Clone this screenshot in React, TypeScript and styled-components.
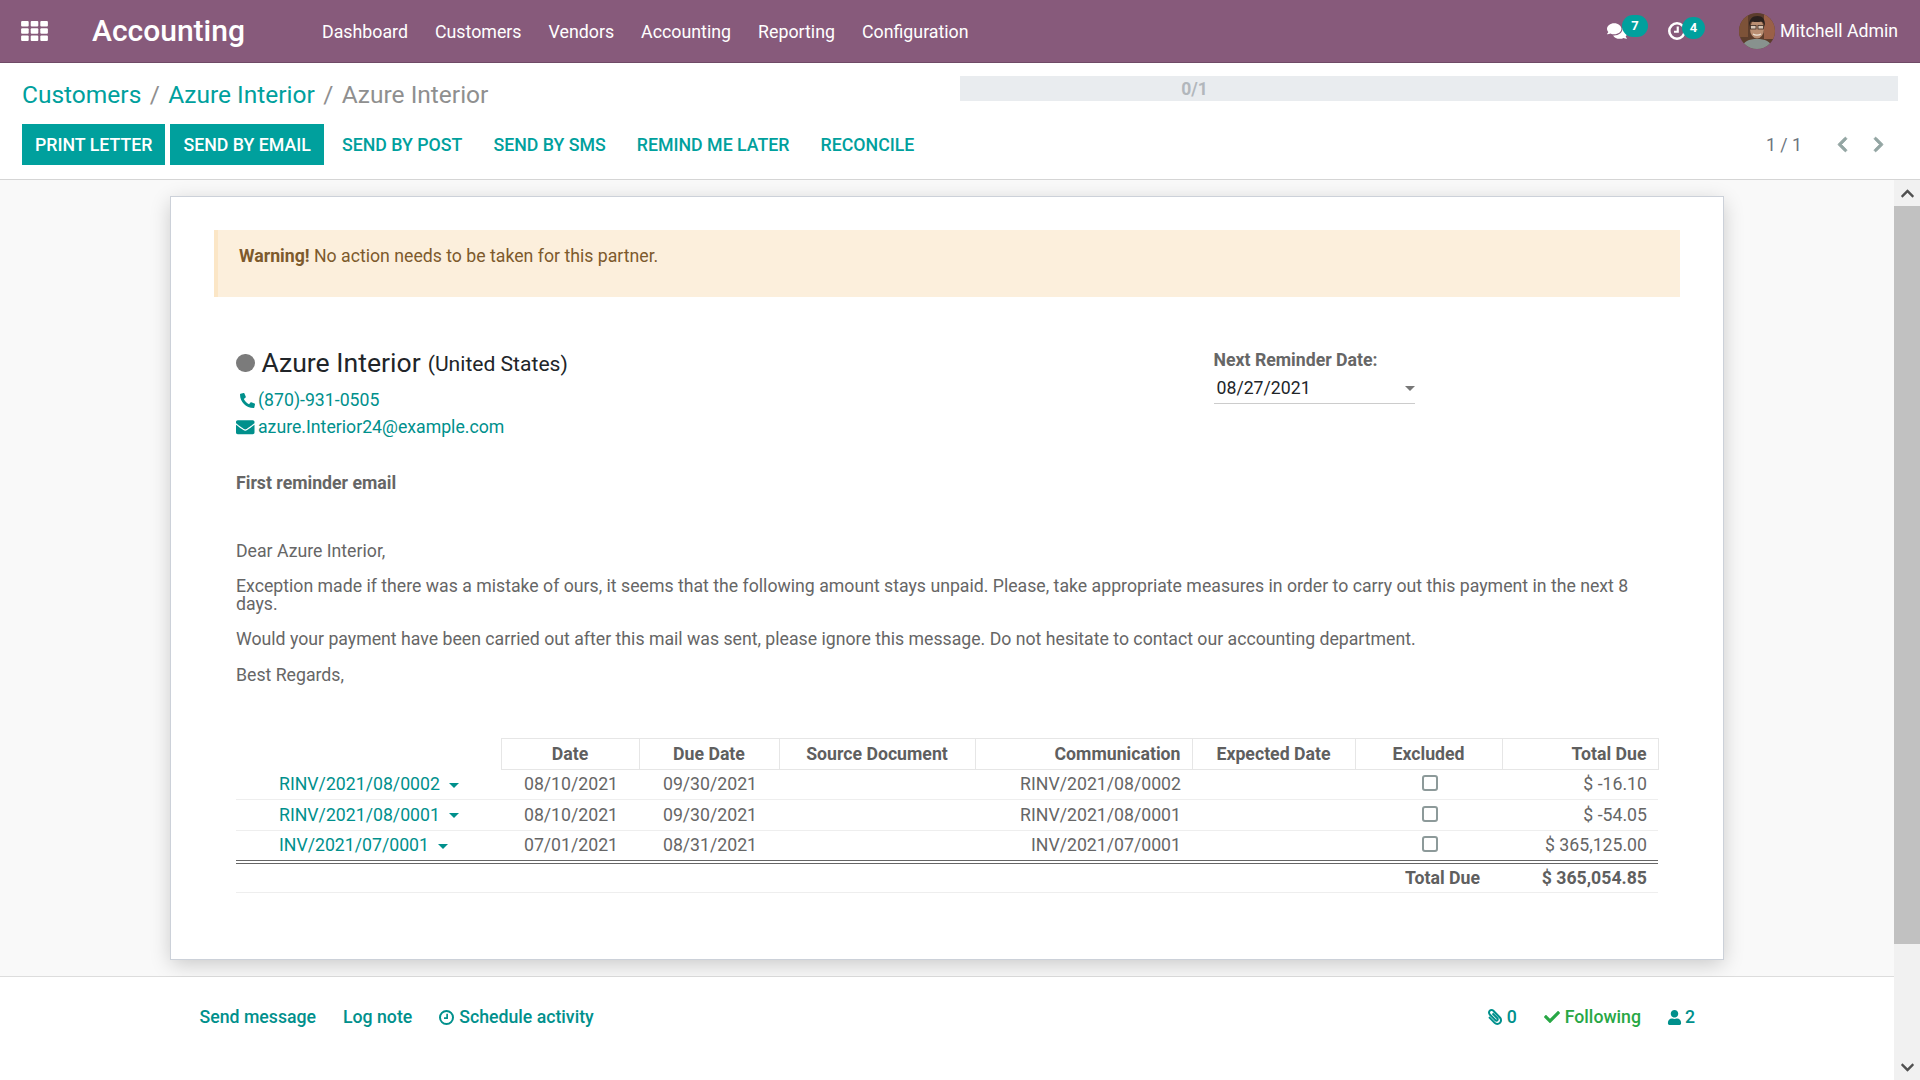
import React from "react";
import styled, { createGlobalStyle } from "styled-components";
import { FaComments, FaPhone, FaEnvelope, FaPaperclip, FaCheck, FaUser, FaChevronLeft, FaChevronRight, FaChevronUp, FaChevronDown } from "react-icons/fa";

const Global = createGlobalStyle`
  html, body { margin: 0; padding: 0; width: 1920px; height: 1080px; overflow: hidden; background: #fff; }
  body { font-family: Roboto, "Liberation Sans", sans-serif; font-size: 17.7px; color: #666; }
  * { box-sizing: border-box; }
`;

const Page = styled.div`
  width: 1920px; height: 1080px; display: flex; flex-direction: column; overflow: hidden;
`;
const TopBar = styled.header`
  height: 63px; flex: none; background: #875a7b; border-bottom: 1px solid #6f4a66;
  display: flex; align-items: center; color: #fff; padding: 0 22px 0 21px;
`;
const Brand = styled.div`
  font-size: 30px; font-weight: 500; margin-left: 44px; margin-right: 77px; line-height: 1;
`;
const Nav = styled.nav`
  display: flex; gap: 27px; font-size: 17.8px; flex: 1; padding-top: 1px;
`;
const Systray = styled.div`
  display: flex; align-items: center; font-size: 17.7px;
`;
const TrayItem = styled.div<{ $w: number }>`
  position: relative; width: ${p => p.$w}px; display: flex; align-items: center; height: 40px;
`;
const Badge = styled.span<{ $l: number; $t: number; $w: number }>`
  position: absolute; left: ${p => p.$l}px; top: ${p => p.$t}px; width: ${p => p.$w}px; height: 21.500px;
  background: #00a09d; border-radius: 11px; color: #fff; font-size: 13px; font-weight: 700;
  display: flex; align-items: center; justify-content: center;
`;
const User = styled.div`
  display: flex; align-items: center; gap: 5px;
`;

const ControlPanel = styled.div`
  flex: none; height: 117px; border-bottom: 1px solid #d5d5d5; background: #fff;
  padding: 13px 22px 0; display: flex; flex-direction: column;
`;
const CpRow = styled.div`
  display: flex; align-items: center; justify-content: space-between;
`;
const Crumbs = styled.div`
  font-size: 24.5px; display: flex; gap: 8.400px; color: #8f8f8f; line-height: 36px; padding-top: 1px; height: 36px;
`;
const CrumbLink = styled.a`
  color: #00a09d;
`;
const Progress = styled.div`
  width: 938px; height: 25px; background: #e9ecef; align-self: flex-start;
`;
const ProgressLabel = styled.div`
  width: 50%; height: 100%; display: flex; align-items: center; justify-content: center;
  color: #b2b7bc; font-size: 17.5px; font-weight: 700;
`;
const CpRowBottom = styled(CpRow)`
  margin-top: 12px;
`;
const Buttons = styled.div`
  display: flex; align-items: center;
`;
const Btn = styled.button<{ $primary?: boolean }>`
  height: 41px; border: 0; font-family: inherit; font-size: 17.75px; font-weight: 500; text-transform: uppercase;
  padding: 0 13px; margin-right: 5px;
  background: ${p => (p.$primary ? "#00a09d" : "transparent")};
  color: ${p => (p.$primary ? "#fff" : "#00a09d")};
`;
const Pager = styled.div`
  display: flex; align-items: center; color: #6c757d; font-size: 17.7px; padding-right: 14px;
  svg { color: #93a5a3; width: 11px; height: 17px; stroke: currentColor; stroke-width: 25px; }
`;
const PagerCount = styled.span`
  margin-right: 35px;
`;
const PagerNext = styled.span`
  display: flex; margin-left: 25px;
`;

const Body = styled.div`
  flex: 1; min-height: 0; display: flex;
`;
const Main = styled.div`
  flex: 1; min-width: 0; display: flex; flex-direction: column;
`;
const FormArea = styled.div`
  height: 797px; flex: none; background: #f9f9f9; padding: 16px 170px 0 170px; border-bottom: 1px solid #ddd;
`;
const Sheet = styled.div`
  height: 764px; background: #fff; border: 1px solid #ccd1d9; box-shadow: 0 5px 20px -1px rgba(0,0,0,0.2);
  padding: 33px 43px 0 43px;
`;
const Alert = styled.div`
  height: 67px; background: #fcefdc; border-left: 4px solid #fbe6c6; color: #7d5a2c; padding: 15px 21px; line-height: 22px;
`;
const AlertStrong = styled.strong`
  font-weight: 700;
`;
const Content = styled.div`
  padding: 0 21px 0 22px;
`;
const Head = styled.div`
  display: flex; justify-content: space-between; margin-top: 51px;
`;
const Title = styled.h1`
  margin: 0; font-size: 26.6px; font-weight: 400; line-height: 30px; color: #212529; display: flex; align-items: center;
`;
const Dot = styled.span`
  width: 18.500px; height: 18.500px; border-radius: 50%; background: #7b7b7b; margin-right: 7px;
`;
const Country = styled.span`
  font-size: 21.1px; margin-left: 7px; position: relative; top: 1px;
`;
const Contact = styled.a<{ $top?: number; $pad?: number }>`
  display: flex; align-items: center; color: #00908c; line-height: 27px; height: 27px;
  margin-top: ${p => p.$top ?? 0}px; padding-left: ${p => p.$pad ?? 0}px;
`;
const ContactIcon = styled.span<{ $w: number; $s: number }>`
  width: ${p => p.$w}px; display: flex; font-size: ${p => p.$s}px;
`;
const Reminder = styled.div`
  width: 201px; margin-right: 244.500px; margin-top: 2px;
`;
const RemLabel = styled.div`
  font-weight: 700; line-height: 20px; color: #666;
`;
const RemInput = styled.div`
  display: flex; align-items: center; justify-content: space-between; height: 32px; margin-top: 2px;
  border-bottom: 1px solid #ccc; color: #212529; padding: 0 0 0 3px;
`;
const Caret = styled.span<{ $c?: string; $m?: number }>`
  display: inline-block; width: 0; height: 0; border-left: 5px solid transparent; border-right: 5px solid transparent;
  border-top: 5px solid ${p => p.$c ?? "#777"}; margin-left: ${p => p.$m ?? 0}px; vertical-align: middle;
`;
const DateCaret = styled(Caret)`
  margin-top: 2px;
`;
const Subject = styled.div`
  margin-top: 33px; line-height: 18px; font-weight: 700; color: #666;
`;
const Para = styled.p<{ $top: number }>`
  margin: ${p => p.$top}px 0 0; line-height: 18px; color: #666;
`;
const Table = styled.table`
  margin-top: 54px; width: 1422px; table-layout: fixed; border-collapse: collapse; color: #666;
`;
const Th = styled.th<{ $a?: string }>`
  height: 31px; border: 1px solid #e6e6e6; padding: 0 11px; font-weight: 700; color: #5f5f5f;
  text-align: ${p => p.$a ?? "center"}; white-space: nowrap;
`;
const EmptyTh = styled.th`
  padding: 0;
`;
const Row = styled.tr<{ $h: number }>`
  height: ${p => p.$h}px; border-bottom: 1px solid #eee;
`;
const LastRow = styled(Row)`
  border-bottom: 4px double #666;
`;
const Td = styled.td<{ $a?: string }>`
  padding: 0 ${p => (p.$a === "center" ? "11px 1px 13px" : "11px 1px")}; text-align: ${p => p.$a ?? "left"}; white-space: nowrap;
`;
const RefTd = styled.td`
  padding: 0 0 1px 43px; color: #00908c; white-space: nowrap;
`;
const Check = styled.span`
  display: block; margin: -1px auto 1px; width: 16px; height: 16px; border: 2px solid #8d9a9a; border-radius: 3px;
`;
const TotalRow = styled.tr`
  height: 31px; border-bottom: 1px solid #eee; font-weight: 700; color: #5f5f5f;
`;
const TotalLabel = styled.td`
  text-align: right; padding-right: 22px;
`;
const TotalValue = styled.td`
  text-align: right; padding-right: 11px;
`;
const Chatter = styled.div`
  flex: 1; background: #fff; display: flex; align-items: flex-start; justify-content: space-between;
  padding: 28px 199px 0 199.500px; font-weight: 500; font-size: 17.7px; color: #00908c;
`;
const ChatGroup = styled.div`
  display: flex; align-items: center; line-height: 24px;
`;
const ChatItem = styled.span<{ $m?: number; $c?: string }>`
  display: flex; align-items: center; margin-left: ${p => p.$m ?? 0}px; color: ${p => p.$c ?? "inherit"};
`;
const IconGap = styled.span<{ $g: number }>`
  margin-left: ${p => p.$g}px;
`;
const Scroll = styled.div`
  flex: none; width: 26px; background: #f1f1f1; display: flex; flex-direction: column; align-items: stretch; color: #505050;
`;
const ScrollBtn = styled.div`
  height: 26px; display: flex; align-items: center; justify-content: center; font-size: 15px;
`;
const Thumb = styled.div`
  height: 738px; background: #c1c1c1;
`;
const ScrollRest = styled.div`
  flex: 1;
`;
const FlipX = styled.span`
  display: flex; transform: scaleX(-1);
`;

function AppsIcon() {
  const cells = [];
  for (let r = 0; r < 3; r++) for (let c = 0; c < 3; c++) cells.push(<rect key={`${r}${c}`} x={c * 9.6} y={r * 7.2} width={7.6} height={5.6} rx={1} fill="#fff" />);
  return <svg width={27} height={20} viewBox="0 0 26.8 20">{cells}</svg>;
}
function ClockIcon({ size, stroke }: { size: number; stroke: number }) {
  return (
    <svg width={size} height={size} viewBox="0 0 24 24" fill="none" stroke="currentColor">
      <circle cx="12" cy="12" r={12 - stroke / 2} strokeWidth={stroke} />
      <path d="M13 6v7H8" strokeWidth={stroke * 0.85} />
    </svg>
  );
}
function Avatar() {
  return (
    <svg width={36} height={36} viewBox="0 0 36 36">
      <defs><clipPath id="av"><circle cx="18" cy="18" r="18" /></clipPath></defs>
      <g clipPath="url(#av)">
        <rect width="36" height="36" fill="#5c3d2c" />
        <rect x="25" width="11" height="26" fill="#9a6048" />
        <rect width="9" height="24" fill="#7d5238" />
        <path d="M3 36c1-8 7-10 15-10s14 2 15 10z" fill="#88928e" />
        <ellipse cx="18" cy="16" rx="7" ry="9.500" fill="#b98e72" />
        <path d="M10 14c-.5-8 3.500-11 8.500-11s8 3 7.500 11c-.8-3-1.500-5-3.500-5.500-3 .8-6.500.8-9.500 0-2 .5-2.500 3-3 5.500z" fill="#2b211e" />
        <rect x="11.500" y="12.500" width="5.500" height="3.500" fill="#d9c8b8" stroke="#3a2a24" strokeWidth=".8" />
        <rect x="19" y="12.500" width="5.500" height="3.500" fill="#d9c8b8" stroke="#3a2a24" strokeWidth=".8" />
        <path d="M14 21c2 1.500 6 1.500 8 0" stroke="#efe4d8" strokeWidth="1.300" fill="none" />
      </g>
    </svg>
  );
}

const NAV = ["Dashboard", "Customers", "Vendors", "Accounting", "Reporting", "Configuration"];
const ROWS = [
  { ref: "RINV/2021/08/0002", date: "08/10/2021", due: "09/30/2021", total: "$ -16.10", h: 30 },
  { ref: "RINV/2021/08/0001", date: "08/10/2021", due: "09/30/2021", total: "$ -54.05", h: 31 },
  { ref: "INV/2021/07/0001", date: "07/01/2021", due: "08/31/2021", total: "$ 365,125.00", h: 31 },
];
const COLS = [265, 138, 140, 196, 217, 163, 147, 156];

export default function App() {
  return (
    <Page>
      <Global />
      <TopBar>
        <AppsIcon />
        <Brand>Accounting</Brand>
        <Nav>{NAV.map(n => <span key={n}>{n}</span>)}</Nav>
        <Systray>
          <TrayItem $w={61}>
            <FaComments size={20} />
            <Badge $l={15} $t={4} $w={26}>7</Badge>
          </TrayItem>
          <TrayItem $w={71}>
            <ClockIcon size={18} stroke={3.400} />
            <Badge $l={14} $t={6} $w={23}>4</Badge>
          </TrayItem>
          <User><Avatar /><span>Mitchell Admin</span></User>
        </Systray>
      </TopBar>
      <ControlPanel>
        <CpRow>
          <Crumbs>
            <CrumbLink>Customers</CrumbLink><span>/</span>
            <CrumbLink>Azure Interior</CrumbLink><span>/</span>
            <span>Azure Interior</span>
          </Crumbs>
          <Progress><ProgressLabel>0/1</ProgressLabel></Progress>
        </CpRow>
        <CpRowBottom>
          <Buttons>
            <Btn $primary>Print Letter</Btn>
            <Btn $primary>Send By Email</Btn>
            <Btn>Send By Post</Btn>
            <Btn>Send By SMS</Btn>
            <Btn>Remind Me Later</Btn>
            <Btn>Reconcile</Btn>
          </Buttons>
          <Pager>
            <PagerCount>1 / 1</PagerCount>
            <FaChevronLeft />
            <PagerNext><FaChevronRight /></PagerNext>
          </Pager>
        </CpRowBottom>
      </ControlPanel>
      <Body>
        <Main>
          <FormArea>
            <Sheet>
              <Alert><AlertStrong>Warning!</AlertStrong> No action needs to be taken for this partner.</Alert>
              <Content>
                <Head>
                  <div>
                    <Title><Dot />Azure Interior<Country>(United States)</Country></Title>
                    <Contact $top={9} $pad={4}><ContactIcon $w={18} $s={15}><FlipX><FaPhone /></FlipX></ContactIcon>(870)-931-0505</Contact>
                    <Contact><ContactIcon $w={22} $s={18.500}><FaEnvelope /></ContactIcon>azure.Interior24@example.com</Contact>
                  </div>
                  <Reminder>
                    <RemLabel>Next Reminder Date:</RemLabel>
                    <RemInput>08/27/2021<DateCaret /></RemInput>
                  </Reminder>
                </Head>
                <Subject>First reminder email</Subject>
                <Para $top={50}>Dear Azure Interior,</Para>
                <Para $top={17}>Exception made if there was a mistake of ours, it seems that the following amount stays unpaid. Please, take appropriate measures in order to carry out this payment in the next 8 days.</Para>
                <Para $top={17}>Would your payment have been carried out after this mail was sent, please ignore this message. Do not hesitate to contact our accounting department.</Para>
                <Para $top={18}>Best Regards,</Para>
                <Table>
                  <colgroup>{COLS.map((w, i) => <col key={i} width={w} />)}</colgroup>
                  <thead>
                    <tr>
                      <EmptyTh />
                      <Th>Date</Th>
                      <Th>Due Date</Th>
                      <Th>Source Document</Th>
                      <Th $a="right">Communication</Th>
                      <Th>Expected Date</Th>
                      <Th>Excluded</Th>
                      <Th $a="right">Total Due</Th>
                    </tr>
                  </thead>
                  <tbody>
                    {ROWS.map((r, i) => {
                      const R = i === 2 ? LastRow : Row;
                      return (
                        <R key={r.ref} $h={r.h}>
                          <RefTd>{r.ref}<Caret $c="#00908c" $m={9} /></RefTd>
                          <Td $a="center">{r.date}</Td>
                          <Td $a="center">{r.due}</Td>
                          <Td />
                          <Td $a="right">{r.ref}</Td>
                          <Td />
                          <Td $a="center"><Check /></Td>
                          <Td $a="right">{r.total}</Td>
                        </R>
                      );
                    })}
                    <TotalRow>
                      <TotalLabel colSpan={7}>Total Due</TotalLabel>
                      <TotalValue>$ 365,054.85</TotalValue>
                    </TotalRow>
                  </tbody>
                </Table>
              </Content>
            </Sheet>
          </FormArea>
          <Chatter>
            <ChatGroup>
              <ChatItem>Send message</ChatItem>
              <ChatItem $m={27}>Log note</ChatItem>
              <ChatItem $m={27}><ClockIcon size={15} stroke={3.200} /><IconGap $g={5}>Schedule activity</IconGap></ChatItem>
            </ChatGroup>
            <ChatGroup>
              <ChatItem><FlipX><FaPaperclip size={16} /></FlipX><IconGap $g={4}>0</IconGap></ChatItem>
              <ChatItem $m={27} $c="#28a745"><FaCheck size={16} /><IconGap $g={5}>Following</IconGap></ChatItem>
              <ChatItem $m={26}><FaUser size={15} /><IconGap $g={3}>2</IconGap></ChatItem>
            </ChatGroup>
          </Chatter>
        </Main>
        <Scroll>
          <ScrollBtn><FaChevronUp /></ScrollBtn>
          <Thumb />
          <ScrollRest />
          <ScrollBtn><FaChevronDown /></ScrollBtn>
        </Scroll>
      </Body>
    </Page>
  );
}
